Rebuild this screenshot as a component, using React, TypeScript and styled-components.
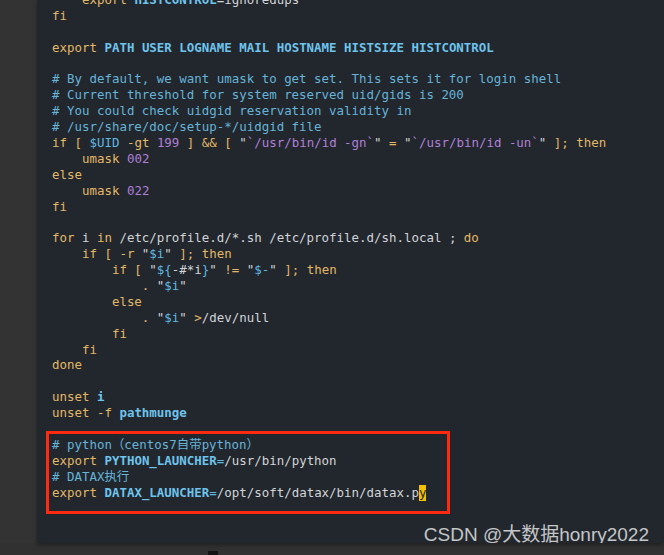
import styled, { createGlobalStyle } from 'styled-components';

const GlobalStyle = createGlobalStyle`
  html, body {
    margin: 0;
    padding: 0;
    background: #313131;
    overflow: hidden;
  }
`;

const Screen = styled.div`
  width: 664px;
  height: 555px;
  display: flex;
  flex-direction: column;
  background: #313131;
`;

const Main = styled.div`
  display: flex;
  height: 543px;
`;

const Gutter = styled.div`
  width: 37px;
  flex-shrink: 0;
  background: #333333;
`;

const Editor = styled.div`
  position: relative;
  flex: 1;
  background: #22272e;
  box-shadow: 0 2px 4px rgba(0, 0, 0, 0.35);
  overflow: hidden;
  padding-left: 15px;
`;

const Code = styled.div`
  display: flex;
  flex-direction: column;
  margin-top: -8px;
  font-family: 'DejaVu Sans Mono', 'Noto Sans CJK SC', monospace;
  font-size: 12.45px;
  color: #d2d4d6;
`;

const Line = styled.div`
  height: 15.9px;
  line-height: 15.9px;
  white-space: pre;
`;

const Marked = styled.div`
  box-sizing: border-box;
  display: flex;
  flex-direction: column;
  margin: 10px 0 0 -6px;
  width: 404px;
  height: 83px;
  padding: 3px 0 0 3px;
  border: 3px solid #ff2a10;
`;

const Kw = styled.span`
  color: #e2b866;
`;
const Cm = styled.span`
  color: #66b4d8;
`;
const Var = styled.span`
  color: #6ec4ec;
  font-weight: bold;
`;
const Dl = styled.span`
  color: #5fb8e0;
`;
const Num = styled.span`
  color: #b07fd6;
`;
const Cursor = styled.span`
  display: inline-block;
  height: 15.9px;
  background: #f2c200;
  color: #22272e;
`;

const Watermark = styled.div`
  position: absolute;
  right: 15px;
  bottom: -3px;
  line-height: 1.15;
  font-family: 'Liberation Sans', 'Noto Sans CJK SC', sans-serif;
  font-size: 19px;
  color: rgba(235, 235, 235, 0.82);
  white-space: nowrap;
`;

const Footer = styled.div`
  flex: 1;
  display: flex;
  align-items: flex-end;
  padding-left: 208px;
`;

const Tab = styled.div`
  width: 10px;
  height: 4px;
  background: #141414;
`;

const App = () => {
  return (
    <Screen>
      <GlobalStyle />
      <Main>
        <Gutter />
        <Editor>
          <Code>
            <Line>
              {'    '}<Kw>export</Kw> <Var>HISTCONTROL</Var>=ignoredups
            </Line>
            <Line><Kw>fi</Kw></Line>
            <Line />
            <Line>
              <Kw>export</Kw> <Var>PATH USER LOGNAME MAIL HOSTNAME HISTSIZE HISTCONTROL</Var>
            </Line>
            <Line />
            <Line><Cm># By default, we want umask to get set. This sets it for login shell</Cm></Line>
            <Line><Cm># Current threshold for system reserved uid/gids is 200</Cm></Line>
            <Line><Cm># You could check uidgid reservation validity in</Cm></Line>
            <Line><Cm># /usr/share/doc/setup-*/uidgid file</Cm></Line>
            <Line>
              <Kw>if [</Kw> <Dl>$UID</Dl> <Kw>-gt</Kw> <Num>199</Num> <Kw>] &amp;&amp; [</Kw> "<Num>`/usr/bin/id -gn`</Num>" <Kw>=</Kw> "<Num>`/usr/bin/id -un`</Num>" <Kw>]; then</Kw>
            </Line>
            <Line>{'    '}<Kw>umask</Kw> <Num>002</Num></Line>
            <Line><Kw>else</Kw></Line>
            <Line>{'    '}<Kw>umask</Kw> <Num>022</Num></Line>
            <Line><Kw>fi</Kw></Line>
            <Line />
            <Line>
              <Kw>for</Kw> i <Kw>in</Kw> /etc/profile.d/*.sh /etc/profile.d/sh.local ; <Kw>do</Kw>
            </Line>
            <Line>
              {'    '}<Kw>if [ -r</Kw> "<Dl>$i</Dl>" <Kw>]; then</Kw>
            </Line>
            <Line>
              {'        '}<Kw>if [</Kw> "<Dl>{'${'}</Dl>-#*i<Dl>{'}'}</Dl>" <Kw>!=</Kw> "<Dl>$-</Dl>" <Kw>]; then</Kw>
            </Line>
            <Line>
              {'            '}<Kw>.</Kw> "<Dl>$i</Dl>"
            </Line>
            <Line>{'        '}<Kw>else</Kw></Line>
            <Line>
              {'            '}<Kw>.</Kw> "<Dl>$i</Dl>" <Kw>&gt;</Kw>/dev/null
            </Line>
            <Line>{'        '}<Kw>fi</Kw></Line>
            <Line>{'    '}<Kw>fi</Kw></Line>
            <Line><Kw>done</Kw></Line>
            <Line />
            <Line><Kw>unset</Kw> <Var>i</Var></Line>
            <Line><Kw>unset -f</Kw> <Var>pathmunge</Var></Line>
            <Marked>
              <Line><Cm># python（centos7自带python）</Cm></Line>
              <Line>
                <Kw>export</Kw> <Var>PYTHON_LAUNCHER</Var><Dl>=</Dl>/usr/bin/python
              </Line>
              <Line><Cm># DATAX执行</Cm></Line>
              <Line>
                <Kw>export</Kw> <Var>DATAX_LAUNCHER</Var><Dl>=</Dl>/opt/soft/datax/bin/datax.p<Cursor>y</Cursor>
              </Line>
            </Marked>
          </Code>
          <Watermark>CSDN @大数据honry2022</Watermark>
        </Editor>
      </Main>
      <Footer>
        <Tab />
      </Footer>
    </Screen>
  );
};

export default App;
